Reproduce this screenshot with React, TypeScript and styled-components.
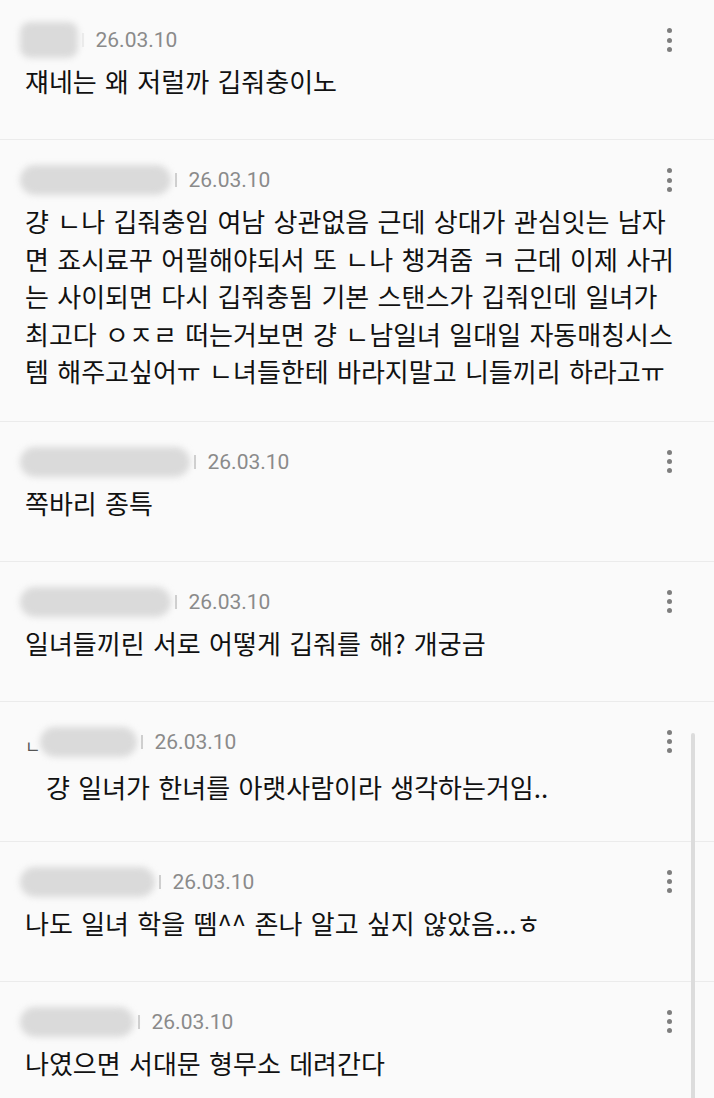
import React from "react";
import styled, { createGlobalStyle } from "styled-components";

const Global = createGlobalStyle`
  html, body { margin: 0; padding: 0; background: #fafafa; }
  body { font-family: "Noto Sans CJK KR", "Noto Sans", sans-serif; }
`;

const Screen = styled.div`
  position: relative;
  width: 714px;
  height: 1098px;
  overflow: hidden;
  background: #fafafa;
`;

const List = styled.ul`
  list-style: none;
  margin: 0;
  padding: 0;
`;

const Item = styled.li`
  min-height: 140px;
  box-sizing: border-box;
  padding: 22px 0 31px;
  border-bottom: 1.5px solid #ebebeb;
`;

const Header = styled.div`
  display: flex;
  align-items: center;
  height: 36px;
  padding: 0 42px 0 20px;
`;

const ReplyMark = styled.span`
  font-family: "Noto Sans CJK KR", sans-serif;
  font-size: 17px;
  color: #555;
  margin: 8px 0 0 5px;
  width: 15px;
  line-height: 1;
`;

const NameBlur = styled.div<{ $w: number; $square?: boolean }>`
  width: ${(p) => p.$w}px;
  height: ${(p) => (p.$square ? 36 : 30)}px;
  border-radius: ${(p) => (p.$square ? 10 : 15)}px;
  background: #dadada;
  filter: blur(3px);
  flex-shrink: 0;
`;

const Divider = styled.span<{ $faint?: boolean }>`
  width: 1.5px;
  height: 14px;
  background: ${(p) => (p.$faint ? "#ececec" : "#cfcfcf")};
  margin: 0 12px 0 4px;
  flex-shrink: 0;
`;

const DateText = styled.span`
  font-family: Roboto, "Liberation Sans", sans-serif;
  font-size: 21px;
  color: #8a8a8a;
`;

const Kebab = styled.div`
  margin-left: auto;
  display: flex;
  flex-direction: column;
  gap: 4.3px;
`;

const Dot = styled.span`
  width: 5px;
  height: 5px;
  border-radius: 50%;
  background: #7e7e7e;
`;

const Body = styled.div<{ $reply?: boolean }>`
  margin-top: ${(p) => (p.$reply ? 8 : 4)}px;
  padding-left: ${(p) => (p.$reply ? 46 : 25)}px;
  font-size: 26px;
  line-height: 37.5px;
  word-spacing: 2.5px;
  color: #111;
  white-space: nowrap;
`;

const Line = styled.div``;

const Scrollbar = styled.div`
  position: absolute;
  left: 691px;
  top: 733px;
  bottom: 0;
  width: 4px;
  border-radius: 2px 2px 0 0;
  background: #dcdcdc;
`;

type Comment = {
  nameW: number;
  square?: boolean;
  reply?: boolean;
  lines: string[];
};

const comments: Comment[] = [
  { nameW: 58, square: true, lines: ["쟤네는 왜 저럴까 깁줘충이노"] },
  {
    nameW: 151,
    lines: [
      "걍 ㄴ나 깁줘충임 여남 상관없음 근데 상대가 관심잇는 남자",
      "면 죠시료꾸 어필해야되서 또 ㄴ나 챙겨줌 ㅋ 근데 이제 사귀",
      "는 사이되면 다시 깁줘충됨 기본 스탠스가 깁줘인데 일녀가",
      "최고다 ㅇㅈㄹ 떠는거보면 걍 ㄴ남일녀 일대일 자동매칭시스",
      "템 해주고싶어ㅠ ㄴ녀들한테 바라지말고 니들끼리 하라고ㅠ",
    ],
  },
  { nameW: 170, lines: ["쪽바리 종특"] },
  { nameW: 151, lines: ["일녀들끼린 서로 어떻게 깁줘를 해? 개궁금"] },
  { nameW: 97, reply: true, lines: ["걍 일녀가 한녀를 아랫사람이라 생각하는거임.."] },
  { nameW: 135, lines: ["나도 일녀 학을 뗌^^ 존나 알고 싶지 않았음...ㅎ"] },
  { nameW: 114, lines: ["나였으면 서대문 형무소 데려간다"] },
];

export default function App() {
  return (
    <Screen>
      <Global />
      <List>
        {comments.map((c, i) => (
          <Item key={i}>
            <Header>
              {c.reply && <ReplyMark>ㄴ</ReplyMark>}
              <NameBlur $w={c.nameW} $square={c.square} />
              <Divider $faint={c.square} />
              <DateText>26.03.10</DateText>
              <Kebab>
                <Dot />
                <Dot />
                <Dot />
              </Kebab>
            </Header>
            <Body $reply={c.reply}>
              {c.lines.map((l, j) => (
                <Line key={j}>{l}</Line>
              ))}
            </Body>
          </Item>
        ))}
      </List>
      <Scrollbar />
    </Screen>
  );
}
